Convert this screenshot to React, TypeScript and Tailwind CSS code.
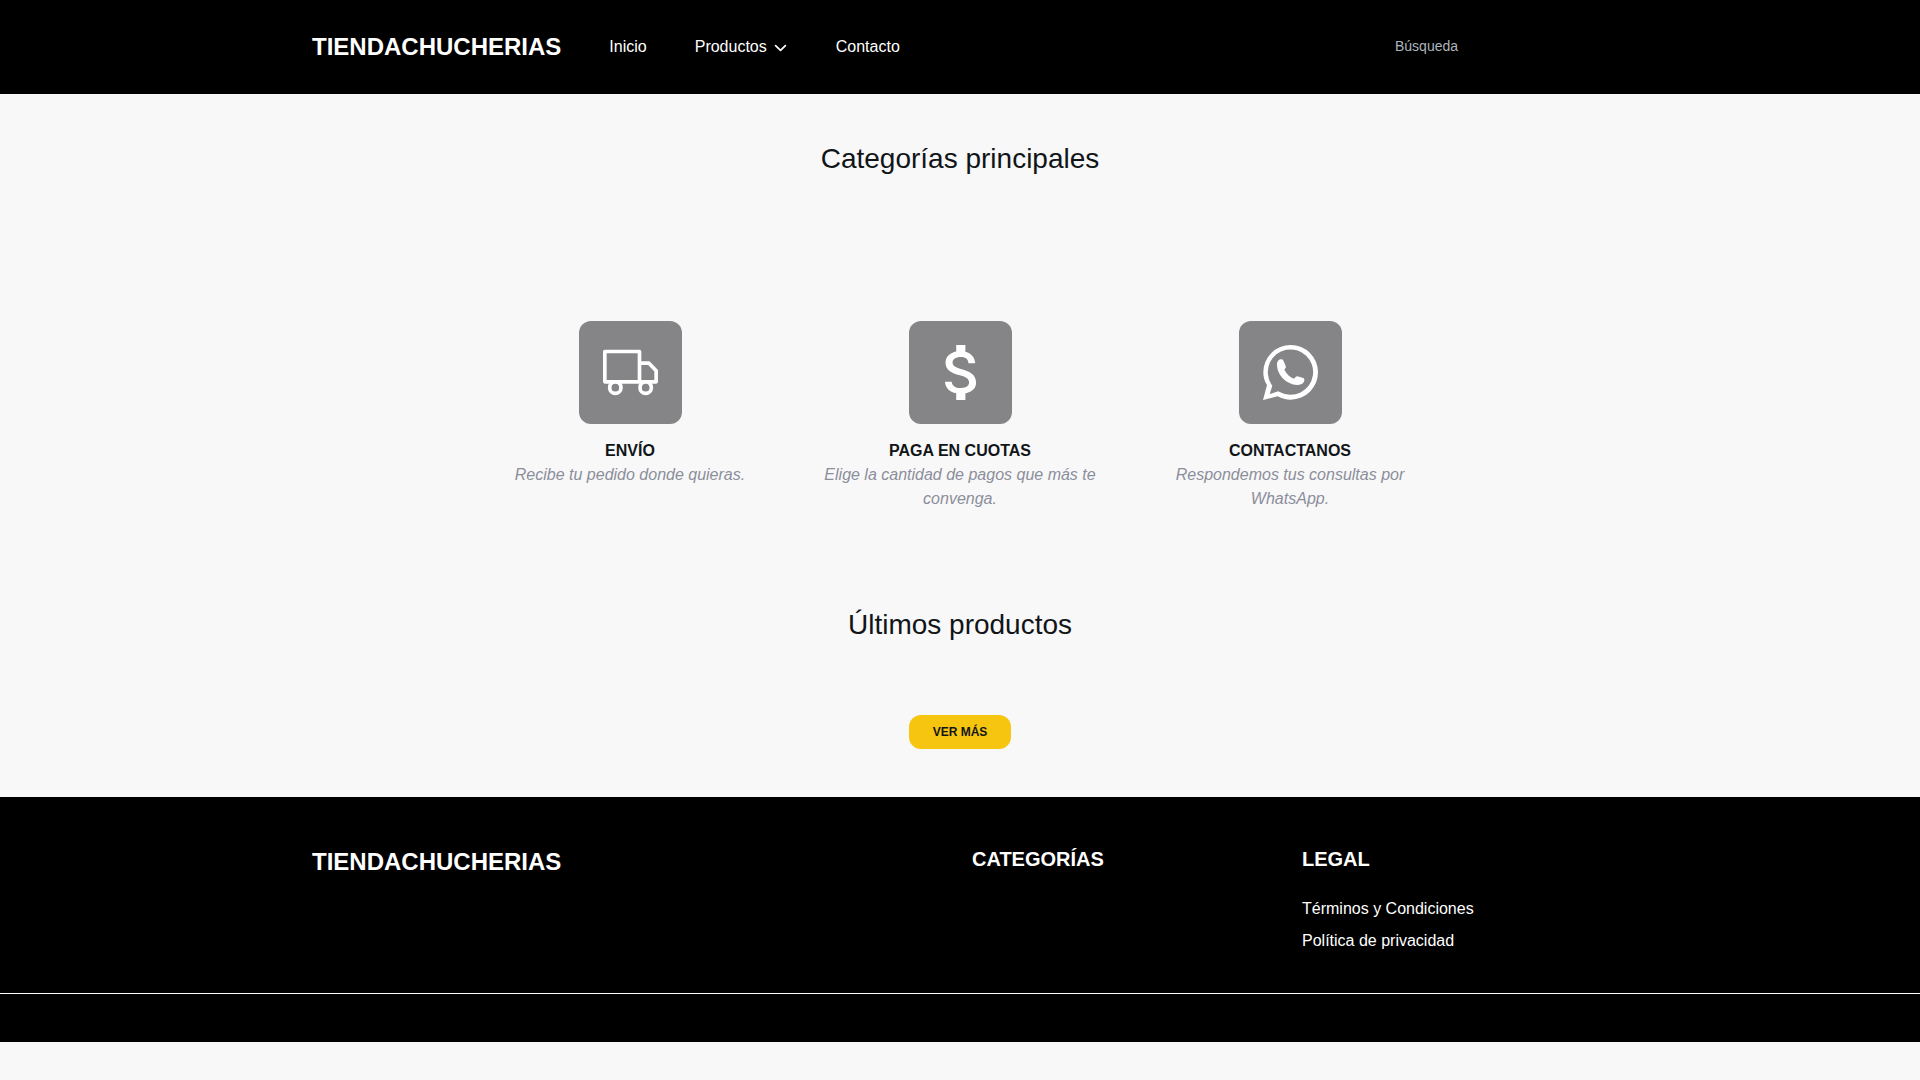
const TruckIcon = () => (
  <svg viewBox="0 0 165 165" className="size-[55px]" fill="none" stroke="currentColor" strokeWidth="11" strokeLinejoin="round" aria-hidden="true">
    <rect x="5.5" y="19.5" width="104" height="91" />
    <path d="M110 54.5H138L159.5 77V110.5H110" />
    <circle cx="37" cy="128" r="17" fill="#858587" />
    <circle cx="128" cy="128" r="17" fill="#858587" />
  </svg>
);

const DollarIcon = () => (
  <svg viewBox="2.4 3 18 18" className="size-[55px]" fill="currentColor" aria-hidden="true">
    <path d="M11.8 10.9c-2.27-.59-3-1.2-3-2.15 0-1.09 1.01-1.85 2.7-1.85 1.78 0 2.44.85 2.5 2.1h2.21c-.07-1.72-1.12-3.3-3.21-3.81V3h-3v2.16c-1.94.42-3.5 1.68-3.5 3.61 0 2.31 1.91 3.46 4.7 4.13 2.5.6 3 1.48 3 2.41 0 .69-.49 1.79-2.7 1.79-2.06 0-2.87-.92-2.98-2.1h-2.2c.12 2.19 1.76 3.42 3.68 3.83V21h3v-2.15c1.95-.37 3.5-1.5 3.5-3.55 0-2.84-2.43-3.81-4.7-4.4z" />
  </svg>
);

const WhatsappIcon = () => (
  <svg viewBox="0 0 165 165" className="size-[55px]" fill="currentColor" aria-hidden="true">
    <path
      fillRule="evenodd"
      d="M0 165L12 120C4 108 1 96 1 82A82 82 0 1 1 83 164C69 164 56 161 44 154ZM20 147L46 139L50 141A68 68 0 1 0 24 116L28 122Z"
    />
    <path d="M42 62C41 52 46 44 52 43C59 42 60 44 62 49L68 63C70 67 68 69 64 74C70 86 80 96 93 101C97 98 99 94 103 94L121 99C126 101 124 108 122 112C118 118 108 121 102 120C70 117 44 92 42 62Z" />
  </svg>
);

const features = [
  { title: "ENVÍO", text: "Recibe tu pedido donde quieras.", Icon: TruckIcon },
  { title: "PAGA EN CUOTAS", text: "Elige la cantidad de pagos que más te convenga.", Icon: DollarIcon },
  { title: "CONTACTANOS", text: "Respondemos tus consultas por WhatsApp.", Icon: WhatsappIcon },
];

export default function App() {
  return (
    <div className="min-h-screen bg-[#f8f8f8] font-['Liberation_Sans',Arial,sans-serif] text-base text-[#111518]">
      <header className="bg-black text-white">
        <div className="mx-auto flex max-w-[1320px] items-center justify-between px-3 py-7">
          <div className="flex items-center gap-12">
            <a href="#" className="text-2xl leading-[38px] font-bold">TIENDACHUCHERIAS</a>
            <nav className="flex items-center gap-12">
              <a href="#">Inicio</a>
              <button type="button" className="flex items-center gap-[7px]">
                Productos
                <svg viewBox="0 0 14 14" className="mt-0.5 size-3.5" fill="none" stroke="currentColor" strokeWidth="1.7" strokeLinecap="round" strokeLinejoin="round" aria-hidden="true">
                  <path d="M1.6 4.6L6.5 9.4L11.4 4.6" />
                </svg>
              </button>
              <a href="#">Contacto</a>
            </nav>
          </div>
          <form role="search" onSubmit={(e) => e.preventDefault()}>
            <input
              type="search"
              aria-label="Búsqueda"
              placeholder="Búsqueda"
              className="block w-[225px] bg-black px-3 pt-1 pb-1.5 text-sm leading-5 text-white outline-none placeholder:text-[#adb5bd]"
            />
          </form>
        </div>
      </header>

      <main className="mx-auto max-w-[1320px] px-3 pt-12 pb-12">
        <section>
          <h2 className="text-center text-[28px] leading-[34px]">Categorías principales</h2>
        </section>
        <section className="-mx-3 mt-[145px] flex flex-wrap justify-center">
          {features.map(({ title, text, Icon }) => (
            <article key={title} className="flex w-full flex-col items-center px-3 text-center sm:w-1/2 lg:w-1/4">
              <div className="rounded-xl bg-[#858587] p-6 text-white">
                <Icon />
              </div>
              <h3 className="mt-[15px] leading-6 font-bold">{title}</h3>
              <p className="leading-6 text-[#8b8e9b] italic">{text}</p>
            </article>
          ))}
        </section>
        <section className="mt-24 flex flex-col items-center">
          <h2 className="text-center text-[28px] leading-9">Últimos productos</h2>
          <button type="button" className="mt-[72px] rounded-xl bg-[#f6c510] px-6 py-2 text-xs leading-[18px] font-bold">
            VER MÁS
          </button>
        </section>
      </main>

      <footer className="bg-black text-white">
        <div className="mx-auto grid max-w-[1320px] grid-cols-4 pt-12 pb-10">
          <div className="col-span-2 px-3">
            <a href="#" className="text-2xl leading-[34px] font-bold">TIENDACHUCHERIAS</a>
          </div>
          <div className="px-3">
            <h2 className="text-xl leading-7 font-bold">CATEGORÍAS</h2>
          </div>
          <div className="px-3">
            <h2 className="text-xl leading-7 font-bold">LEGAL</h2>
            <ul className="mt-6 flex flex-col gap-2 leading-6">
              <li><a href="#">Términos y Condiciones</a></li>
              <li><a href="#">Política de privacidad</a></li>
            </ul>
          </div>
        </div>
        <div className="border-t border-white py-6" />
      </footer>
    </div>
  );
}
